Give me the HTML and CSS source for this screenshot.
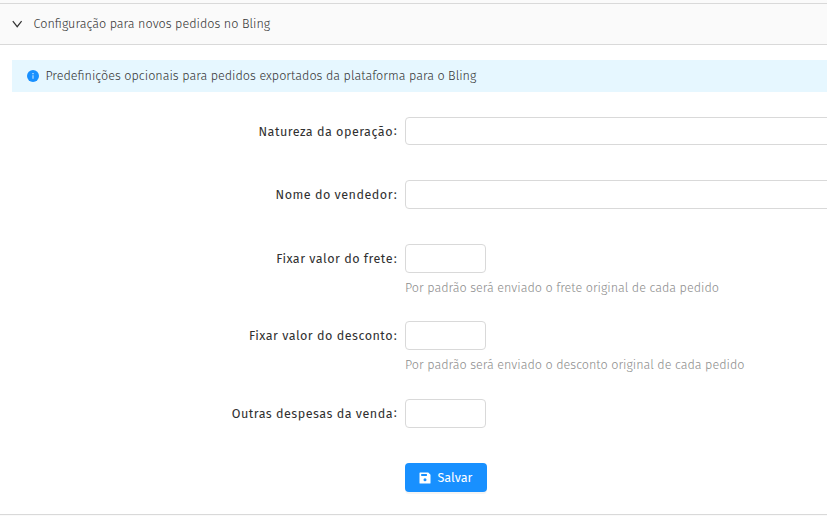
FILE: index.html
```html
<!DOCTYPE html>
<html lang="pt-BR">
<head>
<meta charset="utf-8">
<title>Bling</title>
<link rel="stylesheet" href="styles.css">
</head>
<body>
<section class="panel">
  <header class="panel-header">
    <svg class="chevron" viewBox="0 0 10 8" width="10" height="8"><path d="M.8 1.1 5.2 6.7 9.6 1.1" fill="none" stroke="currentColor" stroke-width="1.2"/></svg>
    <span class="title">Configuração para novos pedidos no Bling</span>
  </header>
  <div class="panel-body">
    <div class="alert">
      <svg class="info" viewBox="0 0 12 12" width="12" height="12"><circle cx="6" cy="6" r="6" fill="#1890ff"/><path d="M5.55 5.2h.9v3.6h-.9zM5.45 3.1h1.1v1.1h-1.1z" fill="#e6f7ff"/></svg>
      <span class="alert-text">Predefinições opcionais para pedidos exportados da plataforma para o Bling</span>
    </div>
    <form class="form">
      <div class="row row-nature">
        <label for="nature"><span>Natureza da operação</span><i class="raised">:</i></label>
        <div class="control"><input id="nature" class="wide short" type="text"></div>
      </div>
      <div class="row row-seller">
        <label for="seller"><span>Nome do vendedor</span><i>:</i></label>
        <div class="control"><input id="seller" class="wide" type="text"></div>
      </div>
      <div class="row row-freight">
        <label for="freight"><span>Fixar valor do frete</span><i>:</i></label>
        <div class="control"><input id="freight" type="text"><p class="help">Por padrão será enviado o frete original de cada pedido</p></div>
      </div>
      <div class="row row-discount">
        <label for="discount"><span>Fixar valor do desconto</span><i>:</i></label>
        <div class="control"><input id="discount" type="text"><p class="help">Por padrão será enviado o desconto original de cada pedido</p></div>
      </div>
      <div class="row row-other">
        <label for="other"><span>Outras despesas da venda</span><i class="raised">:</i></label>
        <div class="control"><input id="other" type="text"></div>
      </div>
      <button class="save" type="button">
        <svg viewBox="0 0 12 12" width="12" height="12"><path fill="#fff" fill-rule="evenodd" d="M1.1.5h8.2l2.2 2.2v8.2q0 .6-.6.6H1.1q-.6 0-.6-.6V1.1q0-.6.6-.6zM2.2 2v2.1h5.7V2zM6 6.3a1.5 1.5 0 1 0 0 3 1.5 1.5 0 0 0 0-3z"/></svg>
        <span class="save-text">Salvar</span>
      </button>
    </form>
  </div>
</section>
</body>
</html>
```
FILE: styles.css
```css
* { box-sizing: border-box; }
body {
  margin: 0;
  height: 516px;
  overflow: hidden;
  padding-top: 3px;
  background: #fafafa;
  color: #333;
  font: 300 12.6px/20px "Fira Sans", "Noto Sans", sans-serif;
}
.panel {
  height: 512px;
  border-top: 1px solid #d9d9d9;
  border-bottom: 1px solid #d9d9d9;
  background: #fff;
}
.panel-header {
  display: flex;
  align-items: center;
  height: 41px;
  padding-left: 12px;
  background: #fafafa;
  border-bottom: 1px solid #d9d9d9;
  white-space: nowrap;
}
.chevron { margin-right: 11.6px; color: #333; overflow: visible; }
.panel-body { padding: 15px 0 0 12px; }
.alert {
  display: flex;
  align-items: center;
  height: 32px;
  padding-left: 15px;
  background: #e6f7ff;
  white-space: nowrap;
}
.info { margin-right: 6.4px; }
.form { padding-top: 25px; }
.row { display: flex; }
.row-nature { height: 63px; }
.row-seller { height: 64px; }
.row-freight { height: 77px; }
.row-discount { height: 78px; }
.row-other { height: 64px; }
label {
  display: flex;
  justify-content: flex-end;
  width: 393px;
  padding-right: 7px;
  line-height: 29px;
  color: #303030;
  font-weight: 400;
  letter-spacing: .48px;
  white-space: nowrap;
}
label i { width: 5px; text-align: center; font-style: normal; }
.raised { line-height: 27px; }
.control { flex: 1; }
input {
  display: block;
  width: 81px;
  height: 29px;
  margin: 0;
  padding: 0 8px;
  border: 1px solid #d9d9d9;
  border-radius: 4px;
  background: #fff;
}
.wide { width: calc(100% + 12px); }
.short { height: 28px; }
.help {
  margin: 5px 0 0;
  color: #8c8c8c;
  white-space: nowrap;
}
.save {
  display: flex;
  align-items: center;
  width: 82px;
  height: 29px;
  margin: 0 0 0 393px;
  padding: 0 0 0 14px;
  border: 0;
  border-radius: 4px;
  background: #1890ff;
  color: #fff;
  font: inherit;
  font-weight: 400;
  box-shadow: 0 2px 0 rgba(0, 0, 0, .045);
}
.save svg { margin-right: 6.5px; }
```
